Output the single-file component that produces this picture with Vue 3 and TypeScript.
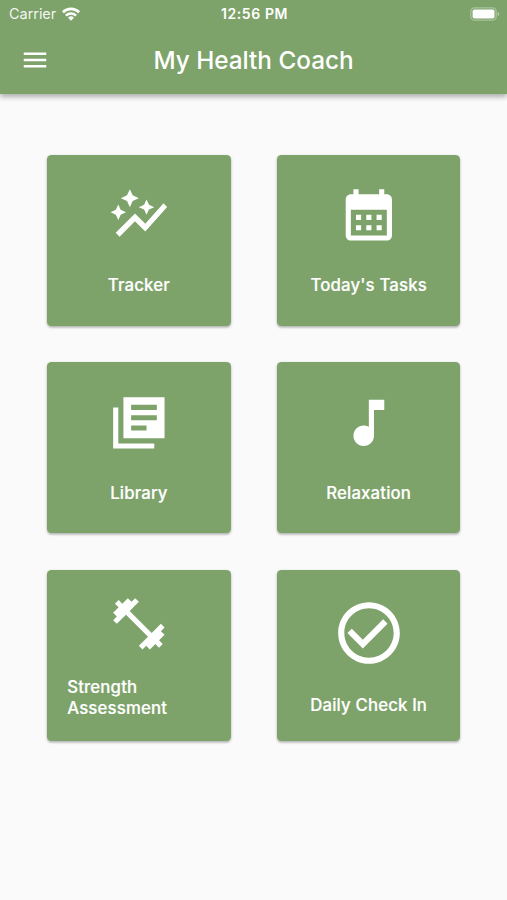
<script setup lang="ts">
interface Tile {
  label: string
  path: string
  kind?: 'wrapped' | 'large'
}

const tiles: Tile[] = [
  {
    label: 'Tracker',
    path: 'M14.06 9.94L12 9l2.06-.94L15 6l.94 2.06L18 9l-2.06.94L15 12l-.94-2.06zM4 14l.94-2.06L7 11l-2.06-.94L4 8l-.94 2.06L1 11l2.06.94L4 14zm4.5-5l1.09-2.41L12 5.5 9.59 4.41 8.5 2 7.41 4.41 5 5.5l2.41 1.09L8.5 9zm-4 11.5l6-6.01 4 4L23 8.93l-1.41-1.41-7.09 7.97-4-4L3 19l1.5 1.5z',
  },
  {
    label: "Today's Tasks",
    path: 'M19 4h-1V2h-2v2H8V2H6v2H5c-1.1 0-2 .9-2 2v14c0 1.1.9 2 2 2h14c1.1 0 2-.9 2-2V6c0-1.1-.9-2-2-2zm0 16H5V10h14v10zM9 14H7v-2h2v2zm4 0h-2v-2h2v2zm4 0h-2v-2h2v2zm-8 4H7v-2h2v2zm4 0h-2v-2h2v2zm4 0h-2v-2h2v2z',
  },
  {
    label: 'Library',
    path: 'M4 6H2v16h16v-2H4V6zm18-4H6v16h16V2zm-3 9H9V9h10v2zm-4 4H9v-2h6v2zm4-8H9V5h10v2z',
  },
  {
    label: 'Relaxation',
    path: 'M12 3v10.55c-.59-.34-1.27-.55-2-.55-2.21 0-4 1.79-4 4s1.79 4 4 4 4-1.79 4-4V7h4V3h-6z',
  },
  {
    label: 'Strength Assessment',
    kind: 'wrapped',
    path: 'M20.57 14.86L22 13.43 20.57 12 17 15.57 8.43 7 12 3.43 10.57 2 9.14 3.43 7.71 2 5.57 4.14 4.14 2.71 2.71 4.14l1.43 1.43L2 7.71l1.43 1.43L2 10.57 3.43 12 7 8.43 15.57 17 12 20.57 13.43 22l1.43-1.43L16.29 22l2.14-2.14 1.43 1.43 1.43-1.43-1.43-1.43L22 16.29l-1.43-1.43z',
  },
  {
    label: 'Daily Check In',
    kind: 'large',
    path: 'M16.59 7.58L10 14.17l-3.59-3.58L5 12l5 5 8-8-1.41-1.42zM12 2C6.48 2 2 6.48 2 12s4.48 10 10 10 10-4.48 10-10S17.52 2 12 2zm0 18c-4.42 0-8-3.58-8-8s3.58-8 8-8 8 3.58 8 8-3.58 8-8 8z',
  },
]
</script>

<template>
  <div class="screen">
    <header class="header">
      <div class="status">
        <div class="carrier">
          <span>Carrier</span>
          <svg class="wifi" viewBox="0 0 18 14">
            <g fill="none" stroke="currentColor" stroke-width="2.6">
              <path d="M.9 5.2a11.6 11.6 0 0 1 16.2 0" />
              <path d="M3.9 8.6a7.3 7.3 0 0 1 10.2 0" />
            </g>
            <path d="M9 13.8l-2.9-3a4.1 4.1 0 0 1 5.8 0z" fill="currentColor" />
          </svg>
        </div>
        <span class="time">12:56 PM</span>
        <svg class="battery" viewBox="0 0 30 14">
          <rect x=".8" y=".8" width="25.4" height="12.4" rx="3.6" fill="none" stroke="currentColor" stroke-opacity=".35" stroke-width="1.3" />
          <rect x="2.6" y="2.5" width="21.9" height="9" rx="1.8" fill="currentColor" />
          <path d="M27.6 4.9v4.2c1.1-.3 1.7-1.1 1.7-2.1s-.6-1.8-1.7-2.1z" fill="currentColor" fill-opacity=".4" />
        </svg>
      </div>
      <div class="toolbar">
        <button class="menu" type="button" aria-label="Menu">
          <svg viewBox="0 0 24 24"><path d="M3 18h18v-2H3v2zm0-5h18v-2H3v2zm0-7v2h18V6H3z" fill="currentColor" /></svg>
        </button>
        <h1 class="title">My Health Coach</h1>
      </div>
    </header>

    <main class="grid">
      <button v-for="tile in tiles" :key="tile.label" type="button" class="tile" :class="tile.kind">
        <svg class="icon" viewBox="0 0 24 24"><path :d="tile.path" fill="currentColor" /></svg>
        <span class="label">{{ tile.label }}</span>
      </button>
    </main>
  </div>
</template>

<style>
body {
  margin: 0;
  background: #fafafa;
}
</style>

<style scoped>
.screen {
  width: 507px;
  height: 900px;
  overflow: hidden;
  background: #fafafa;
  color: #fff;
  font-family: Inter, "Liberation Sans", sans-serif;
}

.header {
  height: 93.7px;
  background: #7da36a;
  box-shadow: 0 2px 5px rgba(0, 0, 0, 0.2), 0 4px 5px rgba(0, 0, 0, 0.1), 0 1px 8px rgba(0, 0, 0, 0.08);
}

.status {
  display: grid;
  grid-template-columns: 1fr auto 1fr;
  align-items: center;
  height: 27px;
  padding: 0 7px 0 9px;
  font-size: 14.5px;
  line-height: 27px;
}

.carrier {
  display: flex;
  align-items: center;
  gap: 6px;
  color: rgba(255, 255, 255, 0.92);
}

.carrier span {
  letter-spacing: -0.05px;
}

.wifi {
  width: 18px;
  height: 14px;
  color: #fff;
}

.time {
  font-size: 14px;
  font-weight: 600;
  letter-spacing: 0.6px;
}

.battery {
  justify-self: end;
  width: 30px;
  height: 14px;
}

.toolbar {
  display: grid;
  grid-template-columns: 70px 1fr 70px;
  align-items: center;
  height: 66px;
}

.menu {
  display: flex;
  justify-content: center;
  padding: 0;
  border: 0;
  background: none;
  color: inherit;
}

.menu svg {
  width: 30px;
  height: 30px;
}

.title {
  margin: 0;
  padding-bottom: 1px;
  font-size: 24.3px;
  font-weight: 500;
  line-height: 32px;
  text-align: center;
}

.grid {
  display: grid;
  grid-template-columns: repeat(2, 183.4px);
  grid-auto-rows: 171px;
  gap: 36.7px 46.4px;
  padding: 61px 0 0 47.2px;
}

.tile {
  display: flex;
  flex-direction: column;
  align-items: center;
  padding: 29.6px 20px 0;
  border: 0;
  border-radius: 4.5px;
  background: #7da36a;
  box-shadow: 0 1px 3px rgba(0, 0, 0, 0.22), 0 2px 2px rgba(0, 0, 0, 0.12);
  color: inherit;
  font: 500 16.8px/21px Inter, "Liberation Sans", sans-serif;
  letter-spacing: 0.15px;
  text-align: left;
  -webkit-text-stroke: 0.2px currentColor;
}

.icon {
  flex: none;
  width: 61.7px;
  height: 61.7px;
}

.label {
  margin-top: 29.3px;
}

.wrapped {
  padding-top: 23px;
}

.wrapped .label {
  margin-top: 22px;
}

.large {
  padding-top: 25.6px;
}

.large .icon {
  width: 74px;
  height: 74px;
}

.large .label {
  margin-top: 24.9px;
}
</style>
